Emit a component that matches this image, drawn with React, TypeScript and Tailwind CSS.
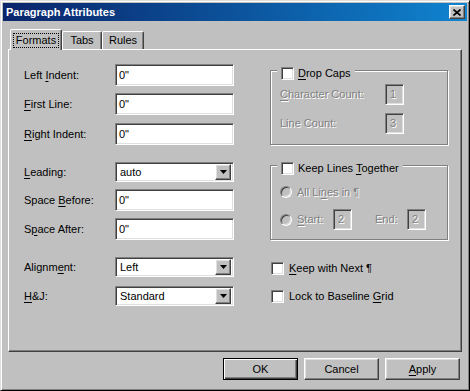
import React from 'react'

const raised = 'border border-t-white border-l-white border-b-[#404040] border-r-[#404040] shadow-[inset_-1px_-1px_0_#808080,inset_1px_1px_0_#dfdfdf]'
const sunken = 'border border-t-[#808080] border-l-[#808080] border-b-white border-r-white shadow-[inset_1px_1px_0_#404040,inset_-1px_-1px_0_#dfdfdf]'
const disabledText = 'text-[#808080] [text-shadow:1px_1px_0_#fff]'

function Label({ text, u }: { text: string; u?: number }) {
  if (u === undefined) return <>{text}</>
  return (
    <>
      {text.slice(0, u)}
      <span className="underline underline-offset-[2px]">{text[u]}</span>
      {text.slice(u + 1)}
    </>
  )
}

function TextField({ value }: { value: string }) {
  return (
    <div className={`${sunken} w-[119px] h-[22px] bg-white flex items-center pl-[3px]`}>
      {value}
    </div>
  )
}

function Select({ value }: { value: string }) {
  return (
    <div className={`${sunken} w-[119px] h-[20px] bg-white flex items-center p-[2px]`}>
      <span className="flex-1 pl-[2px]">{value}</span>
      <div className={`${raised} w-[16px] h-[16px] bg-[#c0c0c0] flex items-center justify-center`}>
        <svg width="7" height="4" viewBox="0 0 7 4">
          <path d="M0 0h7L3.5 4z" fill="#000" />
        </svg>
      </div>
    </div>
  )
}

function Checkbox() {
  return <span className={`${sunken} w-[13px] h-[13px] bg-white shrink-0`} />
}

function Radio() {
  return (
    <span className="w-[12px] h-[12px] rounded-full shrink-0 bg-[#c0c0c0] border border-t-[#808080] border-l-[#808080] border-b-white border-r-white shadow-[inset_1px_1px_0_#404040,inset_-1px_-1px_0_#dfdfdf]" />
  )
}

function SmallField({ value }: { value: string }) {
  return (
    <div className={`${sunken} w-[19px] h-[21px] bg-[#c0c0c0] flex items-center pl-[4px] ${disabledText}`}>
      {value}
    </div>
  )
}

function Row({ label, u, children, mt }: { label: string; u?: number; children: React.ReactNode; mt: string }) {
  return (
    <div className={`flex items-center ${mt}`}>
      <span className="w-[91px]">
        <Label text={label} u={u} />
      </span>
      {children}
    </div>
  )
}

function Group({ title, u, children, className }: { title: string; u: number; children: React.ReactNode; className: string }) {
  return (
    <div className={`relative w-[178px] h-[75px] border border-[#808080] shadow-[inset_1px_1px_0_#fff,1px_1px_0_#fff] ${className}`}>
      <div className="absolute left-[6px] top-[-5px] h-[15px] px-[4px] flex items-center gap-[4px] bg-[#c0c0c0]">
        <Checkbox />
        <span>
          <Label text={title} u={u} />
        </span>
      </div>
      {children}
    </div>
  )
}

function Button({ label, u, primary }: { label: string; u?: number; primary?: boolean }) {
  const cls = primary
    ? 'border border-black shadow-[inset_1px_1px_0_#fff,inset_-1px_-1px_0_#404040,inset_-2px_-2px_0_#808080]'
    : raised
  return (
    <div className={`${cls} w-[75px] h-[22px] flex items-center justify-center`}>
      <Label text={label} u={u} />
    </div>
  )
}

export default function App() {
  return (
    <div className="w-[470px] h-[391px] bg-[#c0c0c0] text-black text-[11px] leading-none font-['Liberation_Sans',Arial,sans-serif] border border-t-[#dfdfdf] border-l-[#dfdfdf] border-b-black border-r-black shadow-[inset_1px_1px_0_#fff,inset_-1px_-1px_0_#808080] p-[2px]">
      {/* Title bar */}
      <div className="h-[18px] bg-gradient-to-r from-[#0a246a] to-[#1084d0] flex items-center justify-between pl-[3px] pr-[2px]">
        <span className="text-white font-bold text-[11px]">Paragraph Attributes</span>
        <div className={`${raised} w-[16px] h-[14px] bg-[#c0c0c0] flex items-center justify-center`}>
          <svg width="8" height="7" viewBox="0 0 8 7">
            <path d="M0.5 0.5L7.5 6.5M7.5 0.5L0.5 6.5" stroke="#000" strokeWidth="1.6" />
          </svg>
        </div>
      </div>

      <div className="ml-[5px] mt-[8px]">
        {/* Tabs */}
        <div className="flex items-end h-[20px] pl-[2px]">
          <div className="relative z-10 -mb-px w-[52px] h-[21px] bg-[#c0c0c0] border-t border-l border-t-white border-l-white border-r border-r-[#404040] shadow-[inset_-1px_0_0_#808080] rounded-t-[2px] flex items-start justify-center pt-[3px]">
            <span className="border border-dotted border-black px-[2px] py-[1px]">Formats</span>
          </div>
          <div className="w-[40px] h-[18px] border-t border-l border-t-white border-l-white border-r border-r-[#404040] shadow-[inset_-1px_0_0_#808080] rounded-t-[2px] flex items-center justify-center">
            Tabs
          </div>
          <div className="w-[42px] h-[18px] border-t border-l border-t-white border-l-white border-r border-r-[#404040] shadow-[inset_-1px_0_0_#808080] rounded-t-[2px] flex items-center justify-center">
            Rules
          </div>
        </div>

        {/* Panel */}
        <div className="w-[454px] h-[303px] border border-t-white border-l-white border-b-[#404040] border-r-[#404040] shadow-[inset_-1px_-1px_0_#808080] flex">
          <div className="pl-[15px] flex flex-col">
            <Row label="Left Indent:" u={5} mt="mt-[14px]">
              <TextField value={'0"'} />
            </Row>
            <Row label="First Line:" u={0} mt="mt-[7px]">
              <TextField value={'0"'} />
            </Row>
            <Row label="Right Indent:" u={0} mt="mt-[8px]">
              <TextField value={'0"'} />
            </Row>
            <Row label="Leading:" u={0} mt="mt-[17px]">
              <Select value="auto" />
            </Row>
            <Row label="Space Before:" u={6} mt="mt-[7px]">
              <TextField value={'0"'} />
            </Row>
            <Row label="Space After:" u={1} mt="mt-[7px]">
              <TextField value={'0"'} />
            </Row>
            <Row label="Alignment:" u={6} mt="mt-[17px]">
              <Select value="Left" />
            </Row>
            <Row label="H&J:" u={0} mt="mt-[9px]">
              <Select value="Standard" />
            </Row>
          </div>

          <div className="ml-[36px] flex flex-col">
            <Group title="Drop Caps" u={0} className="mt-[20px] pt-[13px] pl-[9px]">
              <div className="flex items-center h-[20px]">
                <span className={`w-[105px] ${disabledText}`}>
                  <Label text="Character Count:" u={0} />
                </span>
                <SmallField value="1" />
              </div>
              <div className="flex items-center h-[20px] mt-[9px]">
                <span className={`w-[105px] ${disabledText}`}>Line Count:</span>
                <SmallField value="3" />
              </div>
            </Group>

            <Group title="Keep Lines Together" u={11} className="mt-[20px] pt-[16px] pl-[9px]">
              <div className="flex items-center h-[20px] gap-[5px]">
                <Radio />
                <span className={disabledText}>
                  <Label text="All Lines in ¶" u={6} />
                </span>
              </div>
              <div className="flex items-center h-[21px] mt-[7px]">
                <Radio />
                <span className={`ml-[5px] w-[36px] ${disabledText}`}>
                  <Label text="Start:" u={0} />
                </span>
                <SmallField value="2" />
                <span className={`ml-[23px] w-[32px] ${disabledText}`}>End:</span>
                <SmallField value="2" />
              </div>
            </Group>

            <div className="flex items-center gap-[5px] h-[15px] mt-[21px] ml-[1px]">
              <Checkbox />
              <span>
                <Label text="Keep with Next ¶" u={0} />
              </span>
            </div>
            <div className="flex items-center gap-[5px] h-[15px] mt-[13px] ml-[1px]">
              <Checkbox />
              <span>
                <Label text="Lock to Baseline Grid" u={17} />
              </span>
            </div>
          </div>
        </div>

        {/* Buttons */}
        <div className="flex justify-end gap-[6px] mt-[6px] pr-[7px]">
          <Button label="OK" primary />
          <Button label="Cancel" />
          <Button label="Apply" u={0} />
        </div>
      </div>
    </div>
  )
}
